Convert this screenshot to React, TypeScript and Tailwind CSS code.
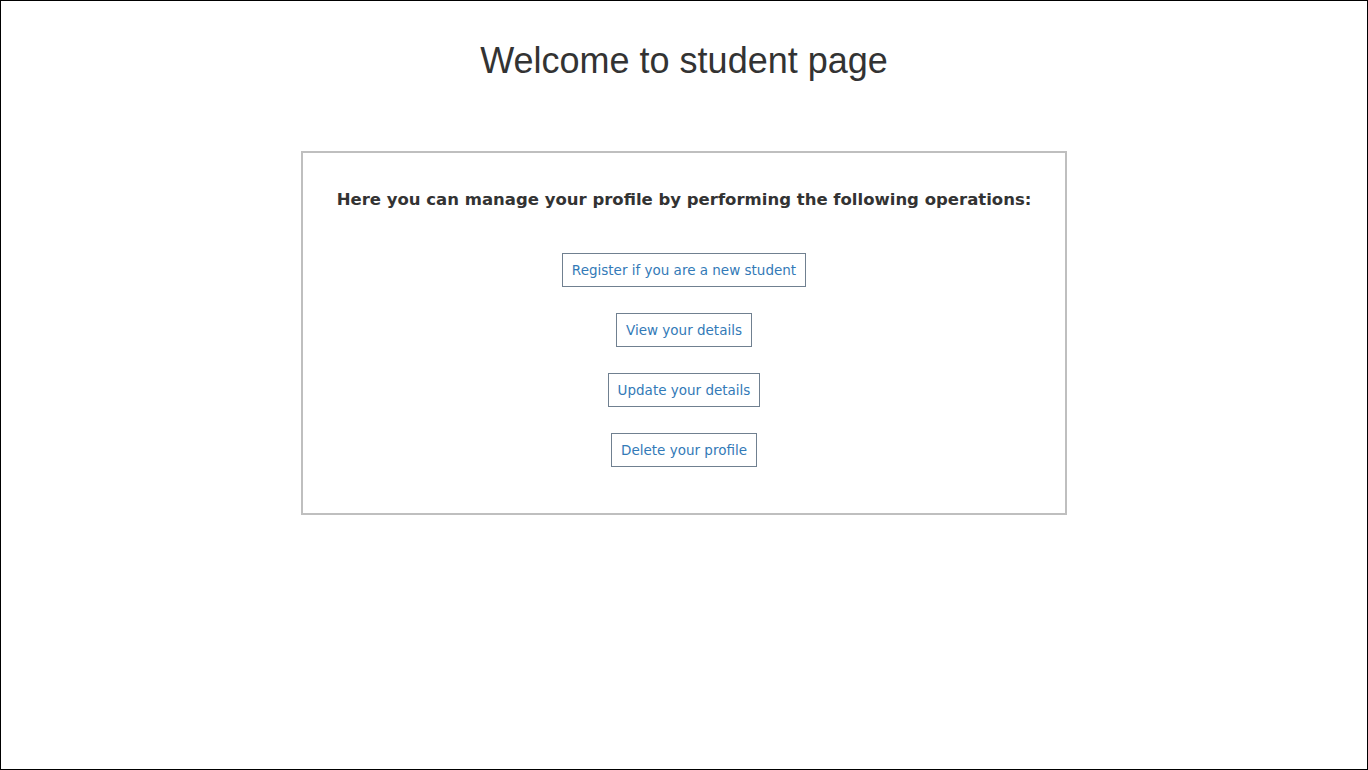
const actions = [
  'Register if you are a new student',
  'View your details',
  'Update your details',
  'Delete your profile',
];

export default function App() {
  return (
    <div className="h-[770px] w-full border border-black bg-white">
      <h1 className="pt-[38px] text-center font-['Liberation_Sans',Arial,sans-serif] text-[36px] leading-[44px] text-[#333]">
        Welcome to student page
      </h1>

      <div className="mx-auto mt-[68px] w-[766px] h-[364px] border-2 border-[#bfbfbf] pt-[33px] font-['DejaVu_Sans',Verdana,sans-serif]">
        <p className="text-center text-[16.5px] font-bold leading-[28px] text-[#333]">
          Here you can manage your profile by performing the following operations:
        </p>

        <div className="mt-[39px] flex flex-col items-center gap-[26px]">
          {actions.map(label => (
            <button
              key={label}
              className="h-[34px] border border-[#708090] bg-white px-[9px] text-[13.5px] text-[#337ab7]"
            >
              {label}
            </button>
          ))}
        </div>
      </div>
    </div>
  );
}
